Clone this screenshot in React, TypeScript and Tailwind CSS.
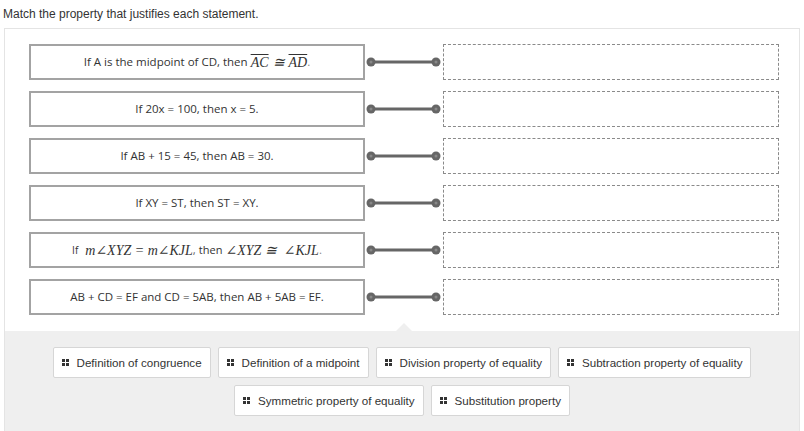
import type { ReactNode } from 'react'

const STATEMENTS: ReactNode[] = [
  <>
    If A is the midpoint of CD, then{' '}
    <span className="math ml-[3px]"><span className="overline">AC</span></span>
    <span className="math mx-[4px] text-[11px] text-[#666]">≅</span>
    <span className="math"><span className="overline">AD</span></span>
    <span className="text-[#888]">.</span>
  </>,
  <>If 20x = 100, then x = 5.</>,
  <>If AB + 15 = 45, then AB = 30.</>,
  <>If XY = ST, then ST = XY.</>,
  <>
    <span className="text-[10px]">If</span>
    <span className="math ml-[7px]">m∠XYZ = m∠KJL</span>
    <span className="text-[#666]">,</span>
    <span className="text-[11px] ml-[3px]"> then </span>
    <span className="math ml-[3px]">∠XYZ ≅ &nbsp;∠KJL</span>
    <span className="text-[#888]">.</span>
  </>,
  <>AB + CD = EF and CD = 5AB, then AB + 5AB = EF.</>,
]

const ROW1 = ['Definition of congruence', 'Definition of a midpoint', 'Division property of equality', 'Subtraction property of equality']
const ROW2 = ['Symmetric property of equality', 'Substitution property']

function Grip() {
  return (
    <svg width="7" height="7" viewBox="0 0 7 7" className="shrink-0">
      <rect x="0" y="0" width="3" height="3" fill="#333" />
      <rect x="4" y="0" width="3" height="3" fill="#333" />
      <rect x="0" y="4" width="3" height="3" fill="#333" />
      <rect x="4" y="4" width="3" height="3" fill="#333" />
    </svg>
  )
}

function Chip({ label }: { label: string }) {
  return (
    <div className="h-[31px] flex items-center gap-[8px] pl-[8px] pr-[8px] bg-white border border-[#d6d6d6] rounded-[2px] text-[11.6px] text-[#333]">
      <Grip />
      <span>{label}</span>
    </div>
  )
}

function Connector() {
  return (
    <svg width="78" height="36" viewBox="0 0 78 36" className="shrink-0">
      <line x1="6" y1="18" x2="71" y2="18" stroke="#666" strokeWidth="3" />
      <circle cx="6" cy="18" r="4.5" fill="#666" />
      <circle cx="6" cy="18" r="1.5" fill="#888" />
      <circle cx="71" cy="18" r="4.5" fill="#666" />
      <circle cx="71" cy="18" r="1.5" fill="#888" />
    </svg>
  )
}

export default function App() {
  return (
    <div className="w-[804px] h-[431px] bg-white overflow-hidden" style={{ fontFamily: '"Liberation Sans", Arial, sans-serif' }}>
      <style>{`.math{font-family:"Liberation Serif","DejaVu Serif",serif;font-style:italic;font-size:14px;color:#333;}`}</style>

      {/* 제목 */}
      <div className="h-[28px] pt-[6px] pl-[3px] text-[12px] leading-[16px] text-[#333]">
        Match the property that justifies each statement.
      </div>

      <div className="mx-[4px] w-[796px] border border-[#e4e4e4] border-b-0">
        {/* 문장 + 빈칸 */}
        <div className="flex flex-col gap-[11px] pt-[15px] pb-[16px] pl-[24px]">
          {STATEMENTS.map((s, i) => (
            <div key={i} className="flex items-center h-[36px]">
              <div
                className="w-[336px] h-[36px] shrink-0 flex items-center justify-center border-2 border-[#a3a3a3] text-[11.5px] text-[#333] whitespace-nowrap"
                style={{ fontFamily: '"Open Sans", "Noto Sans", sans-serif' }}
              >
                {s}
              </div>
              <Connector />
              <div className="w-[336px] h-[36px] shrink-0 border border-dashed border-[#8a8a8a]" />
            </div>
          ))}
        </div>

        {/* 선택지 */}
        <div className="relative bg-[#efefef] pt-[16px] pb-[15px] flex flex-col items-center gap-[7px]">
          <div className="absolute left-[391px] -top-[8px] w-0 h-0 border-l-[8px] border-r-[8px] border-b-[8px] border-l-transparent border-r-transparent border-b-[#efefef]" />
          <div className="flex gap-[7px]">
            {ROW1.map((l) => <Chip key={l} label={l} />)}
          </div>
          <div className="flex gap-[7px]">
            {ROW2.map((l) => <Chip key={l} label={l} />)}
          </div>
        </div>
      </div>
    </div>
  )
}
